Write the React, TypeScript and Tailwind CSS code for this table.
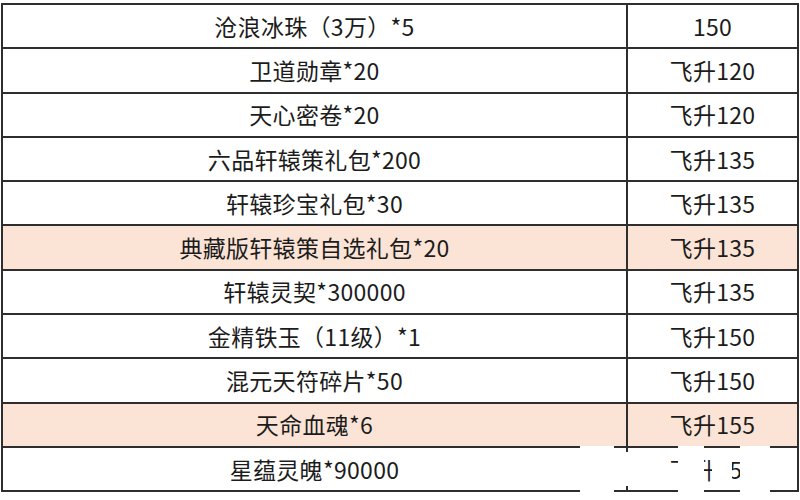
import React from "react";

const rows: { name: string; lv: string; hl?: boolean }[] = [
  { name: "沧浪冰珠（3万）*5", lv: "150" },
  { name: "卫道勋章*20", lv: "飞升120" },
  { name: "天心密卷*20", lv: "飞升120" },
  { name: "六品轩辕策礼包*200", lv: "飞升135" },
  { name: "轩辕珍宝礼包*30", lv: "飞升135" },
  { name: "典藏版轩辕策自选礼包*20", lv: "飞升135", hl: true },
  { name: "轩辕灵契*300000", lv: "飞升135" },
  { name: "金精铁玉（11级）*1", lv: "飞升150" },
  { name: "混元天符碎片*50", lv: "飞升150" },
  { name: "天命血魂*6", lv: "飞升155", hl: true },
  { name: "星蕴灵魄*90000", lv: "飞升155" },
];

export default function App() {
  return (
    <div
      className="relative w-[800px] h-[500px] bg-white overflow-hidden text-[#1c1c1c]"
      style={{ fontFamily: '"Noto Sans CJK SC", "Noto Sans", sans-serif' }}
    >
      <div className="ml-[1px] mt-[3px] w-[798px] border-t-2 border-l-2 border-r-2 border-[#2e2e2e]">
        {rows.map((r, i) => (
          <div
            key={i}
            className={`flex h-[44.3px] border-b-2 border-[#2e2e2e] ${r.hl ? "bg-[#fbe4d6]" : "bg-white"}`}
          >
            <div className="w-[625px] border-r-2 border-[#2e2e2e] flex items-center justify-center text-[23px] leading-none tracking-[0.3px]">
              {r.name}
            </div>
            <div className="flex-1 flex items-center justify-center text-[23px] leading-none tracking-[0.3px]">
              {r.lv}
            </div>
          </div>
        ))}
      </div>
      {/* watermark overlay */}
      <div className="absolute left-[560px] top-[446px] flex items-stretch gap-[8px] h-[46px] pointer-events-none">
        <div className="w-[12px] my-[3px] bg-white" />
        <div className="w-[34px] bg-white" />
        <div className="w-[10px] my-[6px] bg-white" />
        <div className="w-[30px] my-[2px] bg-white" />
        <div className="w-[26px] bg-white" />
        <div className="w-[20px] my-[4px] bg-white" />
        <div className="w-[30px] bg-white" />
      </div>
    </div>
  );
}
